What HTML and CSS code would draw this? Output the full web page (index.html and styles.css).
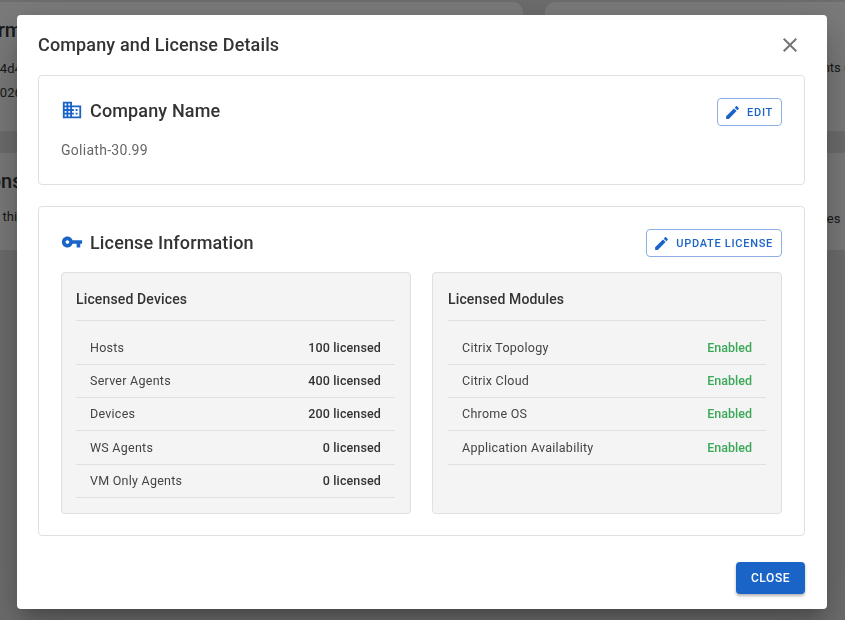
FILE: index.html
```html
<!DOCTYPE html>
<html lang="en">
  <head>
    <meta charset="UTF-8" />
    <meta name="viewport" content="width=device-width, initial-scale=1.0" />
    <title>Company and License Details</title>
    <link rel="stylesheet" href="styles.css">
  </head>
  <body>
    <!-- page behind the dialog -->
    <div class="page">
      <div class="page-card">
        <h3>Platform</h3>
        <p>Key: abcd4d4</p>
        <p>Expires: 2026</p>
      </div>
      <div class="page-card page-card-right">
        <p>Agents (all)</p>
      </div>
      <div class="page-card">
        <h3>Versions</h3>
        <p class="low">Details in this</p>
      </div>
      <div class="page-card page-card-right">
        <p class="low">Routes</p>
      </div>
    </div>

    <div class="overlay">
      <div class="dialog">
        <div class="dialog-head">
          <h1>Company and License Details</h1>
          <svg class="close-icon" viewBox="0 0 24 24"><path d="M19 6.41L17.59 5 12 10.59 6.41 5 5 6.41 10.59 12 5 17.59 6.41 19 12 13.41 17.59 19 19 17.59 13.41 12z"/></svg>
        </div>

        <!-- company -->
        <section class="box box-company">
          <div class="box-head">
            <h2>
              <svg class="head-icon" viewBox="0 0 24 24"><path d="M12 7V3H2v18h20V7H12zM6 19H4v-2h2v2zm0-4H4v-2h2v2zm0-4H4V9h2v2zm0-4H4V5h2v2zm4 12H8v-2h2v2zm0-4H8v-2h2v2zm0-4H8V9h2v2zm0-4H8V5h2v2zm10 12h-8v-2h2v-2h-2v-2h2v-2h-2V9h8v10zm-2-8h-2v2h2v-2zm0 4h-2v2h2v-2z"/></svg>
              Company Name
            </h2>
            <button class="btn-outline">
              <svg viewBox="0 0 24 24"><path d="M3 17.25V21h3.75L17.81 9.94l-3.75-3.75L3 17.25zM20.71 7.04c.39-.39.39-1.02 0-1.41l-2.34-2.34c-.39-.39-1.02-.39-1.41 0l-1.83 1.83 3.75 3.75 1.83-1.83z"/></svg>
              EDIT
            </button>
          </div>
          <p class="company-value">Goliath-30.99</p>
        </section>

        <!-- license -->
        <section class="box box-license">
          <div class="box-head">
            <h2>
              <svg class="head-icon" viewBox="0 0 24 24"><path d="M12.65 10C11.83 7.67 9.61 6 7 6c-3.31 0-6 2.69-6 6s2.69 6 6 6c2.61 0 4.83-1.67 5.65-4H17v4h4v-4h2v-4H12.65zM7 14c-1.1 0-2-.9-2-2s.9-2 2-2 2 .9 2 2-.9 2-2 2z"/></svg>
              License Information
            </h2>
            <button class="btn-outline">
              <svg viewBox="0 0 24 24"><path d="M3 17.25V21h3.75L17.81 9.94l-3.75-3.75L3 17.25zM20.71 7.04c.39-.39.39-1.02 0-1.41l-2.34-2.34c-.39-.39-1.02-.39-1.41 0l-1.83 1.83 3.75 3.75 1.83-1.83z"/></svg>
              UPDATE LICENSE
            </button>
          </div>

          <div class="panels">
            <div class="panel">
              <h3>Licensed Devices</h3>
              <div class="rows">
                <div class="row"><span>Hosts</span><b>100 licensed</b></div>
                <div class="row"><span>Server Agents</span><b>400 licensed</b></div>
                <div class="row"><span>Devices</span><b>200 licensed</b></div>
                <div class="row"><span>WS Agents</span><b>0 licensed</b></div>
                <div class="row"><span>VM Only Agents</span><b>0 licensed</b></div>
              </div>
            </div>
            <div class="panel panel-right">
              <h3>Licensed Modules</h3>
              <div class="rows">
                <div class="row"><span>Citrix Topology</span><b class="enabled">Enabled</b></div>
                <div class="row"><span>Citrix Cloud</span><b class="enabled">Enabled</b></div>
                <div class="row"><span>Chrome OS</span><b class="enabled">Enabled</b></div>
                <div class="row"><span>Application Availability</span><b class="enabled">Enabled</b></div>
              </div>
            </div>
          </div>
        </section>

        <div class="dialog-foot">
          <button class="btn-close">CLOSE</button>
        </div>
      </div>
    </div>
  </body>
</html>
```

FILE: styles.css
```css
:root {
  --blue: #1a64c8;
  --line: #e0e0e0;
  --text: #333333;
}

html, body {
  margin: 0;
  height: 100%;
  overflow: hidden;
}

body {
  background: #dcdcdc;
  font-family: Roboto, "Liberation Sans", sans-serif;
  color: var(--text);
}

/* --- page behind --- */
.page {
  display: grid;
  grid-template-columns: 603px 340px;
  grid-template-rows: 129px 97px;
  gap: 22px;
  margin-left: -80px;
  padding-top: 2px;
  overflow: hidden;
}

.page-card {
  background: #f6f6f6;
  border-radius: 10px;
  padding: 16px 0 0 24px;
  white-space: nowrap;
}

.page-card h3 {
  margin: 0 0 18px;
  font-size: 20px;
  line-height: 24px;
  font-weight: 500;
}

.page-card p {
  margin: 0 0 6px;
  font-size: 13px;
  line-height: 18px;
}

.page-card .low {
  margin: -3px 0 0 2px;
}

.page-card-right {
  padding: 57px 0 0 255px;
}

.page-card-right .low {
  margin: 0;
}

/* --- dialog --- */
.overlay {
  position: fixed;
  inset: 0;
  background: rgba(0, 0, 0, 0.5);
  padding: 15px 0 0 17px;
}

.dialog {
  width: 810px;
  height: 594px;
  box-sizing: border-box;
  background: #fff;
  border-radius: 4px;
  padding: 0 22px 0 21px;
  box-shadow: 0 11px 15px -7px rgba(0,0,0,.2), 0 24px 38px 3px rgba(0,0,0,.14), 0 9px 46px 8px rgba(0,0,0,.12);
}

.dialog-head {
  height: 60px;
  display: flex;
  align-items: center;
  justify-content: space-between;
}

.dialog-head h1 {
  margin: -2px 0 0;
  font-size: 18px;
  font-weight: 500;
  letter-spacing: 0.008em;
}

.close-icon {
  width: 24px;
  height: 24px;
  fill: #757575;
  margin-right: 3px;
}

.box {
  border: 1px solid var(--line);
  border-radius: 4px;
  box-sizing: border-box;
  padding: 22px;
}

.box-company {
  height: 110px;
  margin-bottom: 21px;
}

.box-license {
  height: 330px;
}

.box-head {
  display: flex;
  align-items: center;
  justify-content: space-between;
  height: 28px;
}

.box-head h2 {
  display: flex;
  align-items: center;
  gap: 7px;
  margin: -2px 0 0;
  font-size: 18px;
  font-weight: 500;
  letter-spacing: 0.008em;
}

.box-company .box-head h2 {
  margin-top: -4px;
}

.head-icon {
  width: 22px;
  height: 22px;
  fill: var(--blue);
}

.btn-outline {
  display: flex;
  align-items: center;
  gap: 6.5px;
  height: 28px;
  padding: 0 8px 0 5.5px;
  background: #fff;
  border: 1px solid #8cb0e3;
  border-radius: 4px;
  color: var(--blue);
  font-family: inherit;
  font-size: 11px;
  font-weight: 500;
  letter-spacing: 0.065em;
}

.btn-outline svg {
  width: 17px;
  height: 17px;
  fill: var(--blue);
}

.company-value {
  margin: 14px 0 0;
  font-size: 14px;
  line-height: 20px;
  color: #666;
  letter-spacing: 0.02em;
}

.panels {
  display: grid;
  grid-template-columns: 350px 350px;
  gap: 21px;
  margin-top: 15px;
}

.panel {
  height: 242px;
  box-sizing: border-box;
  background: #f4f4f4;
  border: 1px solid var(--line);
  border-radius: 4px;
  padding: 0 15px 0 14px;
}

.panel-right {
  padding-left: 15px;
}

.panel h3 {
  margin: 0;
  height: 48px;
  box-sizing: border-box;
  padding-top: 4px;
  display: flex;
  align-items: center;
  border-bottom: 1px solid var(--line);
  font-size: 14px;
  font-weight: 500;
  letter-spacing: 0.01em;
}

.rows {
  padding-top: 10.6px;
}

.row {
  display: flex;
  align-items: center;
  justify-content: space-between;
  height: 33.3px;
  box-sizing: border-box;
  padding: 0 14px 1px;
  border-bottom: 1px solid var(--line);
  font-size: 12.5px;
  letter-spacing: 0.02em;
  color: #444;
}

.row b {
  font-weight: 500;
  color: var(--text);
  letter-spacing: 0.01em;
}

.row b.enabled {
  color: #3aa857;
  letter-spacing: 0;
}

.dialog-foot {
  display: flex;
  justify-content: flex-end;
  padding-top: 26px;
}

.btn-close {
  width: 69px;
  height: 32px;
  background: var(--blue);
  border: 0;
  border-radius: 4px;
  color: #fff;
  font-family: inherit;
  font-size: 12px;
  font-weight: 500;
  letter-spacing: 0.05em;
  box-shadow: 0 2px 3px rgba(0,0,0,.3);
}
```
